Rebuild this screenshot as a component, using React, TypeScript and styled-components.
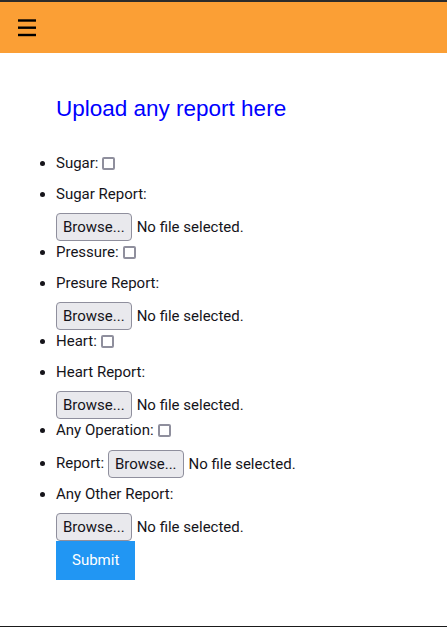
import React from "react";
import styled, { createGlobalStyle } from "styled-components";

const Global = createGlobalStyle`
  html, body { margin: 0; padding: 0; background: #fff; }
  body {
    font-family: Roboto, "Noto Sans", sans-serif;
    font-size: 15px;
    line-height: 1.5;
    color: #15141a;
  }
  * { box-sizing: border-box; }
`;

const Page = styled.div`
  height: 627px;
  display: flex;
  flex-direction: column;
  border-top: 2px solid #2b2b2b;
  border-bottom: 1px solid #1a1a1a;
`;

const TopBar = styled.header`
  height: 51px;
  background: #fb9f35;
  display: flex;
  align-items: flex-start;
  padding: 17px 0 0 18px;
`;

const MenuButton = styled.button`
  border: none;
  background: transparent;
  padding: 0;
  width: 18px;
  height: 18px;
  display: block;
  cursor: pointer;
`;

const Main = styled.main`
  flex: 1;
  padding: 0 16px;
`;

const Title = styled.h2`
  margin: 38.5px 0 0 0;
  padding-left: 40px;
  font-family: "Liberation Sans", Arial, sans-serif;
  font-size: 22.5px;
  line-height: 33.75px;
  font-weight: normal;
  color: #0000ff;
`;

const List = styled.ul`
  margin: 26.75px 0 0 0;
  padding-left: 40px;
  list-style: disc;
`;

const Item = styled.li<{ $gap?: number }>`
  line-height: 22.5px;
  margin-bottom: ${(p) => p.$gap ?? 0}px;
`;

const Line = styled.div<{ $gap?: number }>`
  line-height: 22.5px;
  margin-bottom: ${(p) => p.$gap ?? 0}px;
`;

const Check = styled.input.attrs({ type: "checkbox" })`
  appearance: none;
  -webkit-appearance: none;
  width: 13px;
  height: 13px;
  margin: 0 3px 0 4px;
  border: 2px solid #8f8f9d;
  border-radius: 2px;
  background: #fff;
  vertical-align: -2px;
`;

const FileBox = styled.span`
  display: inline-flex;
  align-items: center;
  gap: 5px;
  height: 28px;
  vertical-align: middle;
`;

const BrowseButton = styled.button`
  height: 28px;
  padding: 0 6px;
  border: 1px solid #8f8f9d;
  border-radius: 4px;
  background: #e9e9ed;
  font-family: Roboto, "Noto Sans", sans-serif;
  font-size: 15px;
  color: #15141a;
  line-height: 26px;
`;

const FileName = styled.span`
  white-space: nowrap;
`;

const Submit = styled.button`
  display: block;
  border: none;
  background: #2196f3;
  color: #fff;
  font-family: Roboto, "Noto Sans", sans-serif;
  font-size: 15px;
  line-height: 22.5px;
  padding: 8px 16px;
  cursor: pointer;
`;

const Hamburger = () => (
  <svg width="18" height="18" viewBox="0 0 18 18">
    <rect x="0" y="0.3" width="18" height="2.4" fill="#000" />
    <rect x="0" y="7.5" width="18" height="2.4" fill="#000" />
    <rect x="0" y="14.8" width="18" height="2.4" fill="#000" />
  </svg>
);

const FileInput = () => (
  <FileBox>
    <BrowseButton type="button">Browse...</BrowseButton>
    <FileName>No file selected.</FileName>
  </FileBox>
);

const CheckItem = ({ label }: { label: string }) => (
  <Item $gap={8.5}>
    {label}
    <Check />
  </Item>
);

const ReportItem = ({ label, last }: { label: string; last?: boolean }) => (
  <Item>
    <Line $gap={7.5}>{label}</Line>
    <Line>
      <FileInput />
    </Line>
    {last && <Submit type="submit">Submit</Submit>}
  </Item>
);

export default function App() {
  return (
    <>
      <Global />
      <Page>
        <TopBar>
          <MenuButton aria-label="menu">
            <Hamburger />
          </MenuButton>
        </TopBar>
        <Main>
          <Title>Upload any report here</Title>
          <form onSubmit={(e) => e.preventDefault()}>
            <List>
              <CheckItem label="Sugar:" />
              <ReportItem label="Sugar Report:" />
              <CheckItem label="Pressure:" />
              <ReportItem label="Presure Report:" />
              <CheckItem label="Heart:" />
              <ReportItem label="Heart Report:" />
              <CheckItem label="Any Operation:" />
              <Item $gap={5}>
                Report: <FileInput />
              </Item>
              <ReportItem label="Any Other Report:" last />
            </List>
          </form>
        </Main>
      </Page>
    </>
  );
}
